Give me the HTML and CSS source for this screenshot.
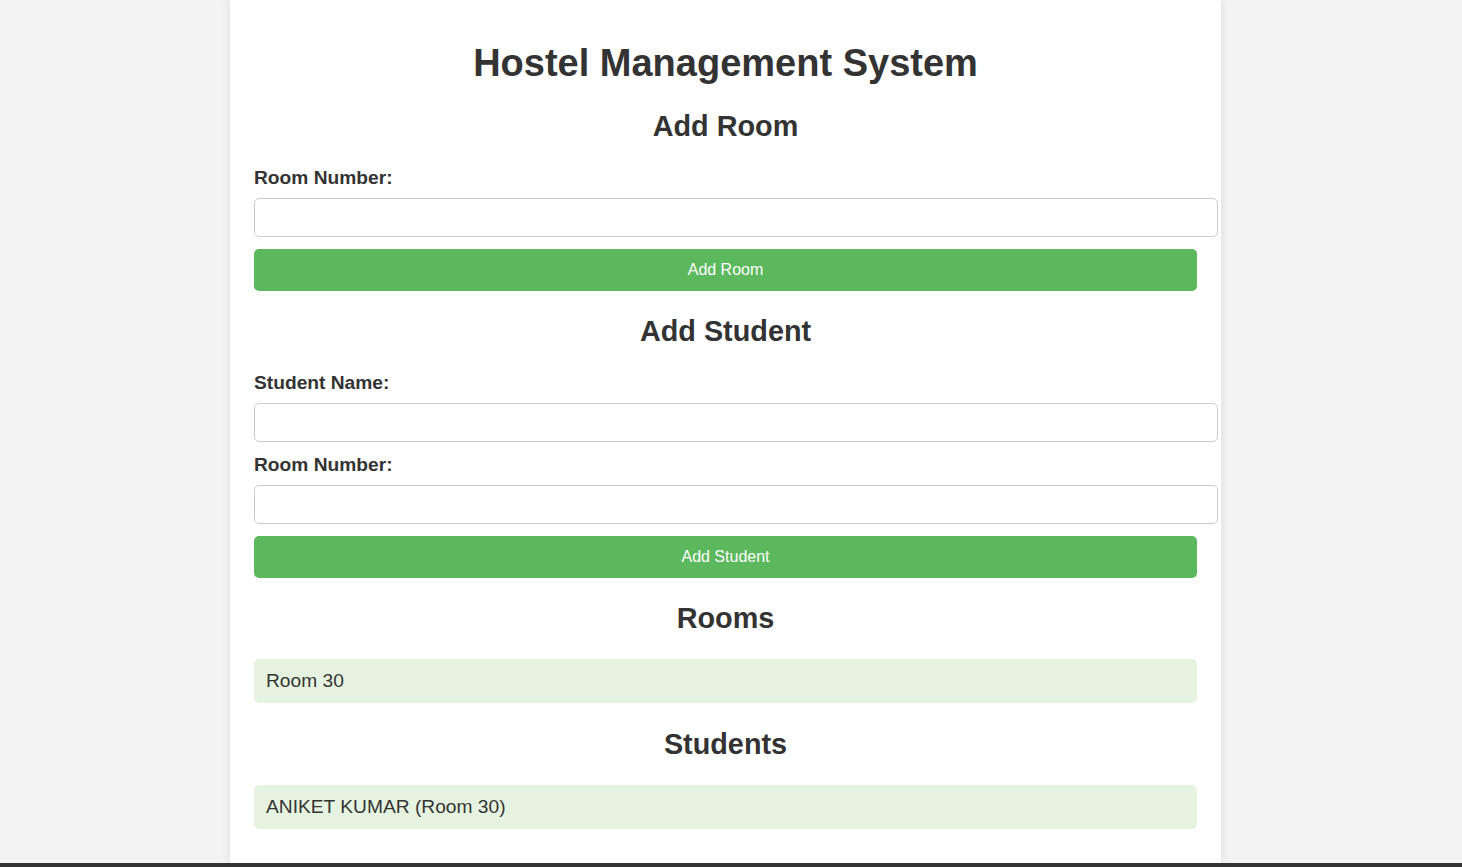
FILE: index.html
```html
<!DOCTYPE html>
<html lang="en">
<head>
<meta charset="UTF-8">
<title>Hostel Management System</title>
<link rel="stylesheet" href="styles.css">
</head>
<body>
<main class="page">
<div class="container">
  <h1>Hostel Management System</h1>

  <h2>Add Room</h2>
  <form class="form">
    <label class="label" for="roomNumber">Room Number:</label>
    <input class="input" type="text" id="roomNumber">
    <button class="btn" type="button">Add Room</button>
  </form>

  <h2>Add Student</h2>
  <form class="form">
    <label class="label" for="studentName">Student Name:</label>
    <input class="input" type="text" id="studentName">
    <label class="label" for="studentRoom">Room Number:</label>
    <input class="input" type="text" id="studentRoom">
    <button class="btn" type="button">Add Student</button>
  </form>

  <h2>Rooms</h2>
  <ul class="list">
    <li class="item">Room 30</li>
  </ul>

  <h2>Students</h2>
  <ul class="list last">
    <li class="item">ANIKET KUMAR (Room 30)</li>
  </ul>
</div>
</main>
<footer class="footer"></footer>
</body>
</html>
```

FILE: styles.css
```css
html, body {
  margin: 0;
  padding: 0;
}
body {
  background: #f3f3f3;
  font-family: "Liberation Sans", Arial, sans-serif;
  color: #333;
}
.page {
  display: block;
  padding-right: 11px;
}
.container {
  width: 943px;
  margin: 0 auto;
  background: #fff;
  padding: 16px 24px 34px;
  box-shadow: 0 0 10px rgba(0, 0, 0, 0.1);
}
h1 {
  font-size: 38px;
  text-align: center;
  margin: 25.5px 0;
}
h2 {
  font-size: 28.8px;
  text-align: center;
  margin: 24px 0;
}
.form {
  margin: 0;
}
.label {
  display: block;
  font-weight: bold;
  font-size: 19.2px;
  line-height: 22px;
  margin-bottom: 9px;
}
.input {
  display: block;
  width: 100%;
  padding: 9.5px;
  margin: 0 0 12px;
  border: 1px solid #ccc;
  border-radius: 5px;
  font-family: "Liberation Sans", Arial, sans-serif;
  font-size: 16px;
  background: #fff;
  box-sizing: content-box;
  height: 18px;
}
.btn {
  display: block;
  width: 100%;
  height: 42px;
  padding: 0;
  background: #5cb85c;
  color: #fff;
  border: none;
  border-radius: 5px;
  font-family: "Liberation Sans", Arial, sans-serif;
  font-size: 16px;
  cursor: pointer;
}
.list {
  list-style: none;
  margin: 0 0 25px;
  padding: 0;
}
.list.last {
  margin-bottom: 0;
}
.item {
  background: #e7f3e1;
  border-radius: 5px;
  padding: 11px 12px;
  font-size: 19.2px;
  line-height: 22px;
}
.footer {
  background: #333;
  height: 40px;
}
```
